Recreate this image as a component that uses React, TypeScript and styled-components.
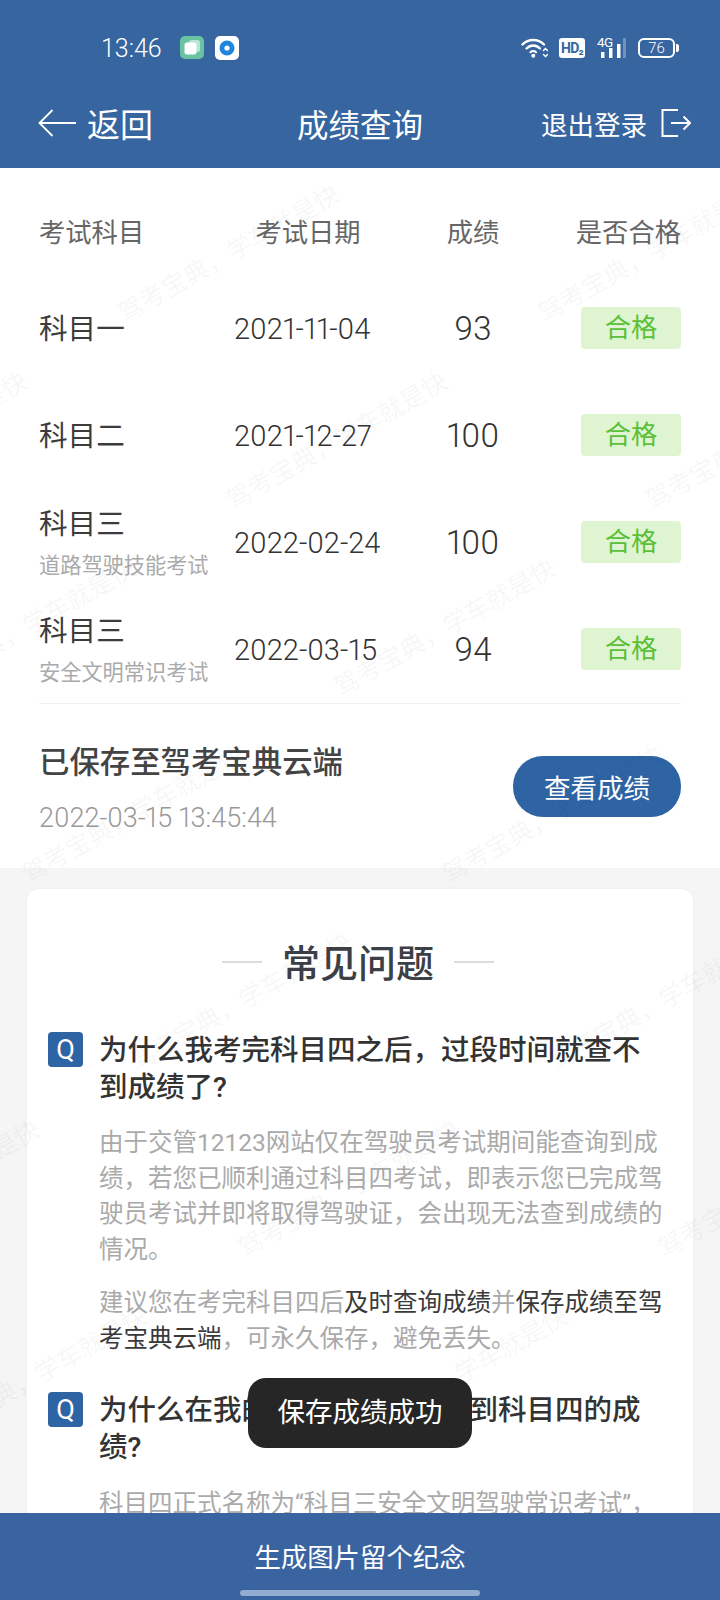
import React from 'react';
import styled, { createGlobalStyle } from 'styled-components';

const FONT = `Roboto, "Noto Sans CJK SC", sans-serif`;

const GlobalStyle = createGlobalStyle`
  html, body {
    margin: 0;
    padding: 0;
    background: #f5f5f5;
    font-family: ${FONT};
  }
  * {
    box-sizing: border-box;
  }
`;

const Page = styled.div`
  position: relative;
  display: flex;
  flex-direction: column;
  width: 720px;
  height: 1600px;
  overflow: hidden;
  background: #f5f5f5;
`;

const Header = styled.header`
  flex: none;
  height: 168px;
  background: #36659f;
  color: #fff;
`;

const StatusBar = styled.div`
  display: flex;
  align-items: center;
  height: 96px;
  padding: 0 45px 0 101px;
`;

const Clock = styled.span`
  width: 79px;
  font-size: 25px;
  font-weight: 300;
`;

const StatusApps = styled.div`
  display: flex;
  gap: 11px;
`;

const StatusIcons = styled.div`
  display: flex;
  align-items: center;
  margin-left: auto;
`;

const HdTag = styled.span`
  display: block;
  width: 26px;
  height: 20px;
  margin: 0 12px 0 11px;
  border-radius: 3px;
  background: #fff;
  color: #36659f;
  font-size: 14px;
  font-weight: 700;
  line-height: 20px;
  text-align: center;
  letter-spacing: -0.8px;
`;

const SignalBox = styled.div`
  position: relative;
  width: 29px;
  height: 20px;
  margin-right: 12px;
`;

const FourG = styled.span`
  position: absolute;
  left: 0;
  top: -3px;
  font-size: 13.5px;
  line-height: 14px;
  letter-spacing: -0.5px;
`;

const Battery = styled.div`
  position: relative;
  width: 37px;
  height: 20px;
  border: 2px solid #fff;
  border-radius: 6px;
  font-size: 15px;
  font-weight: 300;
  line-height: 16px;
  text-align: center;

  &::after {
    content: '';
    position: absolute;
    right: -6px;
    top: 4px;
    width: 3px;
    height: 8px;
    border-radius: 0 2px 2px 0;
    background: #fff;
  }
`;

const Nav = styled.nav`
  display: grid;
  grid-template-columns: 259px auto 1fr;
  align-items: center;
  height: 54px;
  padding: 0 29px 0 38px;
  margin-bottom: 18px;
`;

const NavSide = styled.div<{ $right?: boolean }>`
  display: flex;
  align-items: center;
  justify-content: ${(p) => (p.$right ? 'flex-end' : 'flex-start')};
  gap: ${(p) => (p.$right ? '14px' : '11px')};
`;

const BackLabel = styled.span`
  font-size: 33px;
`;

const NavTitle = styled.h1`
  margin: 0;
  font-size: 31.5px;
  font-weight: 400;
`;

const LogoutLabel = styled.span`
  font-size: 26.5px;
`;

const Content = styled.main`
  position: relative;
  flex: 1;
  min-height: 0;
  overflow: hidden;
`;

const Watermarks = styled.div`
  position: absolute;
  inset: 0;
  z-index: 2;
  pointer-events: none;
`;

const Watermark = styled.span`
  position: absolute;
  font-size: 25px;
  line-height: 25px;
  white-space: nowrap;
  color: rgba(0, 0, 0, 0.05);
  transform: rotate(-29.5deg);
  transform-origin: left center;
`;

const ResultSection = styled.section`
  padding: 30px 39px 0;
  background: #fff;
`;

const Columns = styled.div<{ $head?: boolean }>`
  display: grid;
  grid-template-columns: 195px 148px 182px 117px;
  align-items: center;
  height: ${(p) => (p.$head ? '64px' : '107px')};
  margin-bottom: ${(p) => (p.$head ? '13px' : '0')};
  color: ${(p) => (p.$head ? '#666' : '#333')};
`;

const HeadCell = styled.div<{ $align: string }>`
  font-size: 26.3px;
  text-align: ${(p) => p.$align};
  white-space: nowrap;
`;

const Subject = styled.div`
  font-size: 28.6px;
  line-height: 40px;
  color: #3c3c3c;
`;

const SubjectNote = styled.div`
  margin-top: 7px;
  font-size: 21.2px;
  line-height: 30px;
  color: #aaa;
  white-space: nowrap;
`;

const DateCell = styled.div`
  font-size: 29px;
  font-weight: 300;
  font-variant-numeric: proportional-nums;
  white-space: nowrap;
`;

const ScoreCell = styled.div`
  font-size: 33px;
  font-weight: 300;
  text-align: center;
  font-variant-numeric: proportional-nums;
`;

const PassBadge = styled.div`
  justify-self: end;
  width: 100px;
  height: 42px;
  margin-top: -1px;
  border-radius: 4px;
  background: #dff5d2;
  color: #5cbf38;
  font-size: 26.3px;
  line-height: 42px;
  text-align: center;
`;

const SaveRow = styled.div`
  display: flex;
  align-items: center;
  justify-content: space-between;
  height: 165px;
  padding-bottom: 2px;
  border-top: 1px solid #f1f1f1;
`;

const SaveTitle = styled.div`
  margin-top: 8px;
  font-size: 30.4px;
  font-weight: 500;
  line-height: 44px;
  color: #444;
`;

const SaveTime = styled.div`
  margin-top: 14px;
  font-size: 27px;
  font-weight: 300;
  line-height: 38px;
  color: #999;
  font-variant-numeric: proportional-nums;
`;

const ViewButton = styled.button`
  width: 168px;
  height: 61px;
  margin-top: 2px;
  border: 0;
  border-radius: 30px;
  background: #2f64a4;
  color: #fff;
  font-family: inherit;
  font-size: 26.5px;
`;

const FaqCard = styled.section`
  margin: 21px 27px 0;
  padding: 50px 25px 0 21px;
  border-radius: 12px;
  background: #fff;
  box-shadow: 0 0 4px rgba(0, 0, 0, 0.03);
`;

const FaqTitle = styled.h2`
  display: flex;
  align-items: center;
  justify-content: center;
  gap: 20px;
  margin: 0 0 40px;
  font-size: 38px;
  font-weight: 500;
  line-height: 50px;
  color: #3c4046;

  &::before,
  &::after {
    content: '';
    width: 40px;
    height: 2px;
    margin-top: -4px;
    background: #dcdcdc;
  }
`;

const Question = styled.div`
  display: flex;
  gap: 16px;
`;

const QBadge = styled.span`
  flex: none;
  width: 35px;
  height: 35px;
  margin-top: 3px;
  border-radius: 4px;
  background: #2f64a4;
  color: #fff;
  font-size: 27px;
  line-height: 37px;
  text-align: center;
`;

const QuestionText = styled.h3`
  margin: 3px 0 0;
  font-size: 28.5px;
  font-weight: 500;
  line-height: 37px;
  color: #333;
`;

const Answer = styled.p<{ $gap: number }>`
  margin: ${(p) => p.$gap}px 0 0 51px;
  font-size: 24.5px;
  line-height: 35.5px;
  color: #aaa;
`;

const Strong = styled.span`
  color: #3a3a3a;
`;

const QuestionGroup = styled.div`
  margin-top: 33px;
`;

const BottomBar = styled.footer`
  position: relative;
  flex: none;
  height: 87px;
  padding-top: 24px;
  background: #3a649f;
  color: #fff;
  font-size: 26.4px;
  line-height: 42px;
  text-align: center;
`;

const HomeIndicator = styled.div`
  position: absolute;
  left: 240px;
  bottom: 4px;
  width: 240px;
  height: 6px;
  border-radius: 3px;
  background: #94abd2;
`;

const Toast = styled.div`
  position: absolute;
  left: 248px;
  top: 1378px;
  z-index: 5;
  width: 224px;
  height: 70px;
  border-radius: 18px;
  background: #262626;
  color: #fff;
  font-size: 27.5px;
  line-height: 70px;
  text-align: center;
`;

const rows = [
  { subject: '科目一', date: '2021-11-04', score: '93' },
  { subject: '科目二', date: '2021-12-27', score: '100' },
  { subject: '科目三', note: '道路驾驶技能考试', date: '2022-02-24', score: '100' },
  { subject: '科目三', note: '安全文明常识考试', date: '2022-03-15', score: '94' },
];

// lattice of the diagonal watermark, measured on the page
const watermarks: { x: number; y: number }[] = [];
for (let i = -1; i < 7; i++) {
  for (let j = -3; j < 3; j++) {
    watermarks.push({ x: 120 + 108 * i + 420 * j, y: 315 + 187 * i - 168 - 12 });
  }
}

const AppIconGreen = () => (
  <svg width="24" height="23" viewBox="0 0 24 23">
    <rect width="24" height="23" rx="5" fill="#69c3a0" />
    <rect x="9" y="4" width="11" height="12" rx="2.5" fill="#fff" opacity="0.55" />
    <rect x="4.5" y="6.5" width="12" height="12" rx="2.5" fill="#fff" />
  </svg>
);

const AppIconBlue = () => (
  <svg width="24" height="24" viewBox="0 0 24 24">
    <rect width="24" height="24" rx="5" fill="#fff" />
    <circle cx="12" cy="12" r="7.5" fill="#1f86e0" />
    <circle cx="12" cy="12" r="2.6" fill="#fff" />
  </svg>
);

const WifiIcon = () => (
  <svg width="27" height="20" viewBox="0 0 27 20" fill="none" stroke="#fff" strokeLinecap="round">
    <path d="M1.5 6.5C7.5 .5 17 .5 23 6.5" strokeWidth="2.4" />
    <path d="M5.5 10.5C9.5 6.5 15 6.5 19 10.5" strokeWidth="2.4" />
    <path d="M9.5 14.2C11 12.8 13.5 12.8 15 14.2" strokeWidth="2.2" />
    <circle cx="12.3" cy="17.8" r="2" fill="#fff" stroke="none" />
    <path d="M22.5 12.5L24.5 10.5L26.5 12.5M22.5 16.5L24.5 18.5L26.5 16.5" strokeWidth="1.5" />
  </svg>
);

const SignalBars = () => (
  <svg width="29" height="20" viewBox="0 0 29 20" fill="#fff">
    <rect x="4" y="14" width="3.5" height="6" />
    <rect x="12" y="10" width="3.5" height="10" />
    <rect x="20" y="6" width="3.5" height="14" />
    <rect x="26" y="0" width="3" height="20" opacity="0.3" />
  </svg>
);

const BackArrow = () => (
  <svg width="38" height="28" viewBox="0 0 38 28" fill="none" stroke="#fff" strokeWidth="1.8">
    <path d="M38 14H2M14.5 1L1.5 14L14.5 27" />
  </svg>
);

const LogoutIcon = () => (
  <svg width="30" height="28" viewBox="0 0 30 28" fill="none" stroke="#fff" strokeWidth="2">
    <path d="M17 1H1.5V27H17M10 14H28.5M22.5 7.5L29 14L22.5 20.5" />
  </svg>
);

const App: React.FC = () => (
  <Page>
    <GlobalStyle />
    <Header>
      <StatusBar>
        <Clock>13:46</Clock>
        <StatusApps>
          <AppIconGreen />
          <AppIconBlue />
        </StatusApps>
        <StatusIcons>
          <WifiIcon />
          <HdTag>HD₂</HdTag>
          <SignalBox>
            <FourG>4G</FourG>
            <SignalBars />
          </SignalBox>
          <Battery>76</Battery>
        </StatusIcons>
      </StatusBar>
      <Nav>
        <NavSide>
          <BackArrow />
          <BackLabel>返回</BackLabel>
        </NavSide>
        <NavTitle>成绩查询</NavTitle>
        <NavSide $right>
          <LogoutLabel>退出登录</LogoutLabel>
          <LogoutIcon />
        </NavSide>
      </Nav>
    </Header>

    <Content>
      <ResultSection>
        <Columns $head>
          <HeadCell $align="left">考试科目</HeadCell>
          <HeadCell $align="center">考试日期</HeadCell>
          <HeadCell $align="center">成绩</HeadCell>
          <HeadCell $align="right">是否合格</HeadCell>
        </Columns>
        {rows.map((row) => (
          <Columns key={row.date}>
            <div>
              <Subject>{row.subject}</Subject>
              {row.note && <SubjectNote>{row.note}</SubjectNote>}
            </div>
            <DateCell>{row.date}</DateCell>
            <ScoreCell>{row.score}</ScoreCell>
            <PassBadge>合格</PassBadge>
          </Columns>
        ))}
        <SaveRow>
          <div>
            <SaveTitle>已保存至驾考宝典云端</SaveTitle>
            <SaveTime>2022-03-15 13:45:44</SaveTime>
          </div>
          <ViewButton>查看成绩</ViewButton>
        </SaveRow>
      </ResultSection>

      <FaqCard>
        <FaqTitle>常见问题</FaqTitle>
        <Question>
          <QBadge>Q</QBadge>
          <QuestionText>为什么我考完科目四之后，过段时间就查不到成绩了?</QuestionText>
        </Question>
        <Answer $gap={19}>
          由于交管12123网站仅在驾驶员考试期间能查询到成绩，若您已顺利通过科目四考试，即表示您已完成驾驶员考试并即将取得驾驶证，会出现无法查到成绩的情况。
        </Answer>
        <Answer $gap={18}>
          建议您在考完科目四后<Strong>及时查询成绩</Strong>并<Strong>保存成绩至驾考宝典云端</Strong>，可永久保存，避免丢失。
        </Answer>
        <QuestionGroup>
          <Question>
            <QBadge>Q</QBadge>
            <QuestionText>为什么在我的交管账号里查不到科目四的成绩?</QuestionText>
          </Question>
          <Answer $gap={20}>科目四正式名称为“科目三安全文明驾驶常识考试”，</Answer>
        </QuestionGroup>
      </FaqCard>

      <Watermarks>
        {watermarks.map((w) => (
          <Watermark key={`${w.x}-${w.y}`} style={{ left: w.x, top: w.y }}>
            驾考宝典，学车就是快
          </Watermark>
        ))}
      </Watermarks>
    </Content>

    <BottomBar>
      生成图片留个纪念
      <HomeIndicator />
    </BottomBar>
    <Toast>保存成绩成功</Toast>
  </Page>
);

export default App;
